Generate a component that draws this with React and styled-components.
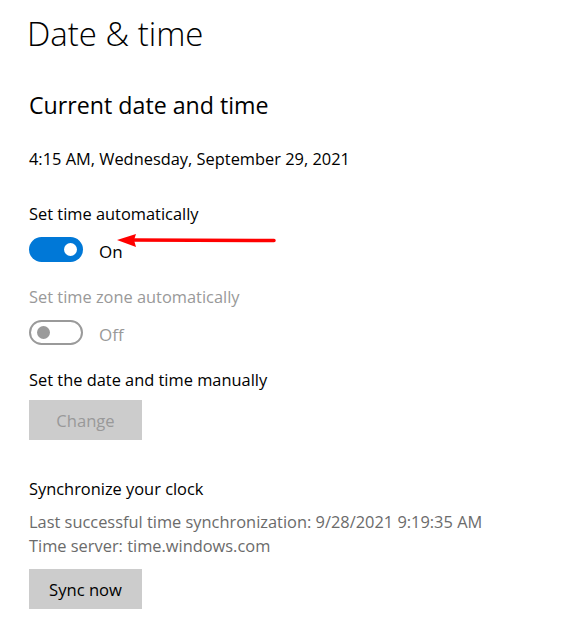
import React from 'react'
import styled, { createGlobalStyle } from 'styled-components'

const GlobalStyle = createGlobalStyle`
  html, body {
    margin: 0;
    padding: 0;
    background: #fff;
  }
  body {
    font-family: 'Open Sans', 'Noto Sans', sans-serif;
    color: #000;
  }
`

const Page = styled.div`
  position: relative;
  padding: 12px 29px 0;
  width: 584px;
  height: 637px;
  box-sizing: border-box;
`

const Title = styled.h1`
  margin: 0 0 0 -2px;
  font-size: 33px;
  font-weight: 300;
  line-height: 44px;
`

const SectionTitle = styled.h2`
  margin: 33px 0 0;
  font-size: 23.2px;
  font-weight: 400;
  line-height: 32px;
`

const Line = styled.div(({ muted, top = 0 }) => ({
  marginTop: `${top}px`,
  fontSize: '16.4px',
  lineHeight: '24px',
  whiteSpace: 'nowrap',
  color: muted === 'light' ? '#999' : muted ? '#6b6b6b' : '#000'
}))

const ToggleRow = styled.div`
  display: flex;
  align-items: center;
  gap: 16px;
  margin-top: 11px;
  height: 25px;
`

const Track = styled.span(({ on }) => ({
  position: 'relative',
  display: 'inline-block',
  width: '54px',
  height: '25px',
  boxSizing: 'border-box',
  borderRadius: '13px',
  background: on ? '#0078d7' : '#fff',
  border: on ? 'none' : '2px solid #9a9a9a'
}))

const Knob = styled.span(({ on }) => ({
  position: 'absolute',
  top: on ? '6px' : '4px',
  left: on ? '35px' : '6px',
  width: '13px',
  height: '13px',
  borderRadius: '50%',
  background: on ? '#fff' : '#9a9a9a'
}))

const ToggleLabel = styled.span(({ disabled }) => ({
  fontSize: '17px',
  lineHeight: '25px',
  color: disabled ? '#999' : '#000',
  marginTop: '3px'
}))

const Button = styled.button(({ disabled, top = 8 }) => ({
  display: 'block',
  marginTop: `${top}px`,
  width: '113px',
  height: '40px',
  border: 'none',
  padding: 0,
  background: '#ccc',
  color: disabled ? '#999' : '#000',
  fontFamily: 'inherit',
  fontSize: '16.6px',
  cursor: disabled ? 'default' : 'pointer'
}))

const Arrow = styled.svg`
  position: absolute;
  left: 114px;
  top: 230px;
`

function Toggle({ on, disabled, children }) {
  return (
    <ToggleRow>
      <Track on={on}>
        <Knob on={on} />
      </Track>
      <ToggleLabel disabled={disabled}>{children}</ToggleLabel>
    </ToggleRow>
  )
}

export default function App() {
  return (
    <Page>
      <GlobalStyle />
      <Title>Date &amp; time</Title>
      <SectionTitle>Current date and time</SectionTitle>
      <Line top={26}>4:15 AM, Wednesday, September 29, 2021</Line>
      <Line top={31}>Set time automatically</Line>
      <Toggle on>On</Toggle>
      <Line top={23} muted="light">Set time zone automatically</Line>
      <Toggle disabled>Off</Toggle>
      <Line top={23}>Set the date and time manually</Line>
      <Button disabled>Change</Button>
      <Line top={37}>Synchronize your clock</Line>
      <Line top={9} muted>Last successful time synchronization: 9/28/2021 9:19:35 AM</Line>
      <Line muted>Time server: time.windows.com</Line>
      <Button top={11}>Sync now</Button>
      <Arrow width="165" height="22" viewBox="0 0 165 22">
        <line x1="18" y1="10" x2="160" y2="10.5" stroke="#f00" strokeWidth="3.5" strokeLinecap="round" />
        <polygon points="3,10 22,4 20,10 22,17" fill="#f00" />
      </Arrow>
    </Page>
  )
}
